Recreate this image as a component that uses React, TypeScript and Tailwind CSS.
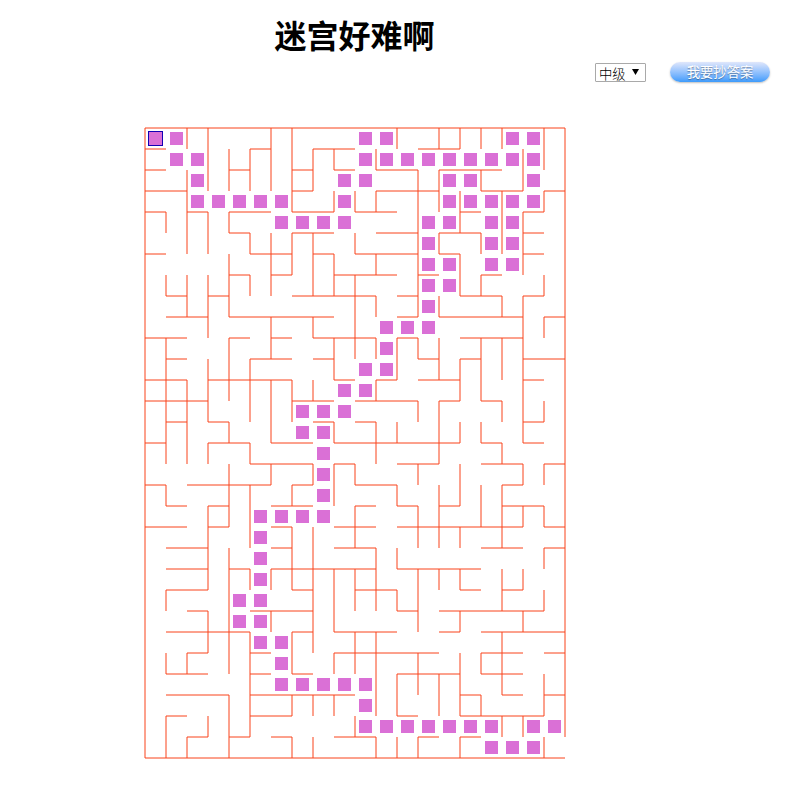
const CELL = 21;

// Wall runs as [start, end] pairs, one list for each grid line.
const HORIZONTAL: number[][][] = [
  [[0, 20]],
  [[0, 1], [5, 6], [8, 10], [13, 15]],
  [[0, 1], [4, 5], [7, 8], [9, 10], [11, 13], [14, 17]],
  [[0, 2], [7, 8], [11, 14], [16, 18], [19, 20]],
  [[0, 1], [2, 3], [4, 6], [7, 9], [10, 12], [15, 16], [18, 19]],
  [[4, 5], [7, 9], [11, 13], [14, 16], [18, 19]],
  [[0, 1], [5, 7], [8, 9], [10, 13], [14, 15], [18, 19]],
  [[4, 5], [6, 7], [9, 12], [13, 14], [16, 17]],
  [[1, 2], [3, 4], [7, 11], [12, 13], [15, 17], [18, 19]],
  [[1, 3], [4, 9], [12, 13], [14, 18], [19, 20]],
  [[0, 2], [4, 5], [6, 7], [8, 11], [12, 13], [15, 18]],
  [[1, 2], [5, 7], [8, 9], [13, 14], [15, 16], [18, 20]],
  [[0, 2], [3, 7], [9, 10], [11, 12], [13, 15], [18, 19]],
  [[0, 3], [7, 9], [10, 13], [14, 15], [16, 17]],
  [[1, 2], [3, 4], [8, 9], [10, 11], [18, 19]],
  [[0, 1], [3, 5], [6, 8], [9, 15], [16, 17], [18, 19]],
  [[5, 8], [9, 10], [12, 14], [16, 18], [19, 20]],
  [[0, 1], [2, 6], [7, 8], [10, 12], [17, 18]],
  [[1, 2], [3, 4], [6, 8], [10, 11], [12, 13], [14, 15], [17, 19]],
  [[0, 2], [3, 4], [6, 7], [9, 11], [12, 18], [19, 20]],
  [[1, 3], [6, 7], [9, 11], [16, 18], [19, 20]],
  [[1, 3], [4, 5], [6, 11], [12, 16]],
  [[1, 3], [7, 8], [10, 12], [15, 16], [17, 18]],
  [[2, 3], [5, 8], [12, 13], [14, 19]],
  [[1, 5], [7, 8], [9, 12], [14, 15], [16, 20]],
  [[2, 3], [5, 6], [9, 14], [16, 18], [19, 20]],
  [[1, 3], [5, 6], [7, 8], [12, 15], [16, 18]],
  [[1, 4], [5, 10], [15, 16], [17, 18], [19, 20]],
  [[1, 2], [5, 7], [12, 13], [15, 19]],
  [[2, 3], [4, 5], [6, 7], [9, 11], [13, 14], [15, 16]],
  [[0, 20]],
];

const VERTICAL: number[][][] = [
  [[0, 30]],
  [[4, 5], [7, 8], [10, 16], [17, 18], [22, 23], [25, 26], [28, 30]],
  [[0, 1], [2, 6], [7, 9], [12, 16], [25, 26], [29, 30]],
  [[0, 3], [4, 6], [7, 10], [11, 14], [15, 16], [18, 22], [23, 25], [28, 29]],
  [[1, 3], [4, 5], [6, 9], [10, 13], [14, 15], [16, 19], [20, 26], [27, 30]],
  [[1, 3], [5, 6], [7, 8], [11, 14], [15, 16], [17, 20], [21, 22], [24, 29]],
  [[0, 3], [5, 8], [9, 11], [12, 15], [16, 17], [21, 22], [23, 24]],
  [[0, 4], [5, 7], [12, 14], [17, 18], [19, 22], [24, 26], [27, 28], [29, 30]],
  [[1, 3], [5, 8], [9, 10], [12, 13], [16, 17], [19, 25], [27, 28], [29, 30]],
  [[1, 2], [3, 4], [6, 8], [10, 12], [14, 15], [16, 18], [21, 24], [25, 26], [27, 28]],
  [[3, 4], [5, 6], [7, 11], [16, 17], [18, 20], [21, 23], [24, 26], [28, 29]],
  [[1, 2], [3, 4], [6, 7], [8, 9], [10, 11], [12, 13], [14, 16], [20, 23], [24, 28], [29, 30]],
  [[0, 1], [10, 12], [14, 15], [17, 18], [20, 21], [22, 23], [26, 28], [29, 30]],
  [[2, 9], [10, 11], [13, 14], [16, 17], [18, 20], [21, 24], [25, 27], [29, 30]],
  [[0, 1], [2, 4], [5, 6], [8, 9], [10, 12], [13, 16], [17, 20], [21, 22], [26, 28]],
  [[0, 1], [3, 5], [6, 8], [11, 13], [14, 15], [16, 18], [19, 20], [21, 22], [23, 24], [25, 28], [29, 30]],
  [[0, 1], [2, 3], [5, 6], [7, 8], [10, 13], [14, 15], [17, 19], [25, 26], [27, 28]],
  [[0, 1], [3, 6], [8, 9], [10, 12], [13, 14], [15, 16], [17, 20], [21, 23], [24, 27], [28, 29]],
  [[1, 3], [4, 7], [8, 15], [16, 17], [18, 19], [21, 22], [23, 24], [28, 29]],
  [[0, 2], [3, 4], [7, 8], [9, 10], [13, 14], [16, 17], [18, 19], [20, 21], [22, 23], [26, 28], [29, 30]],
  [[0, 29]],
];

// Columns visited in each row.
const TRAIL: number[][] = [
  [0, 1, 10, 11, 17, 18],
  [1, 2, 10, 11, 12, 13, 14, 15, 16, 17, 18],
  [2, 9, 10, 14, 15, 18],
  [2, 3, 4, 5, 6, 9, 14, 15, 16, 17, 18],
  [6, 7, 8, 9, 13, 14, 16, 17],
  [13, 16, 17],
  [13, 14, 16, 17],
  [13, 14],
  [13],
  [11, 12, 13],
  [11],
  [10, 11],
  [9, 10],
  [7, 8, 9],
  [7, 8],
  [8],
  [8],
  [8],
  [5, 6, 7, 8],
  [5],
  [5],
  [5],
  [4, 5],
  [4, 5],
  [5, 6],
  [6],
  [6, 7, 8, 9, 10],
  [10],
  [10, 11, 12, 13, 14, 15, 16, 18, 19],
  [16, 17, 18],
];

function Maze() {
  return (
    <svg width="422" height="632" viewBox="-1 -1 422 632" className="block">
      <g stroke="#f9421a" strokeWidth="1">
        {HORIZONTAL.flatMap((runs, j) =>
          runs.map(([a, b]) => (
            <line key={`h${j}-${a}`} x1={a * CELL} x2={b * CELL} y1={j * CELL} y2={j * CELL} />
          )),
        )}
        {VERTICAL.flatMap((runs, i) =>
          runs.map(([a, b]) => (
            <line key={`v${i}-${a}`} x1={i * CELL} x2={i * CELL} y1={a * CELL} y2={b * CELL} />
          )),
        )}
      </g>
      <g fill="#da70d6">
        {TRAIL.flatMap((cols, row) =>
          cols.map((col) => (
            <rect key={`${row}-${col}`} x={col * CELL + 4} y={row * CELL + 4} width="13" height="13" />
          )),
        )}
      </g>
      <rect x="3.5" y="3.5" width="14" height="14" fill="none" stroke="#1400b4" />
    </svg>
  );
}

export default function App() {
  return (
    <div className="h-[800px] w-[800px] overflow-hidden bg-white font-['Noto_Sans_CJK_SC',sans-serif] text-black">
      <h1 className="w-[709px] pt-[13px] text-center text-[32px] leading-[43px] font-bold">迷宫好难啊</h1>
      <div className="mt-1.5 ml-[595px] flex h-[21px] items-start gap-6">
        <button className="mt-px flex h-[19px] w-[51px] items-center rounded-[1px] border border-[#a9a9a9] bg-white pl-[3px] text-[13.33px] leading-[19px] font-light">
          <span className="pt-px">中级</span>
          <svg width="7" height="6" viewBox="0 0 7 6" className="mb-[2px] ml-[6px]">
            <path d="M0 0h7L3.5 6z" fill="#000" />
          </svg>
        </button>
        <button className="h-5 w-[100px] rounded-full bg-linear-to-b from-[#dfe6fb] to-[#3d9bfb] text-center text-[13.33px] leading-5 text-white shadow-[0_1px_2px_rgba(0,0,0,0.25)] [text-shadow:0_1px_1px_rgba(0,0,0,0.35)]">
          我要抄答案
        </button>
      </div>
      <div className="mt-11 ml-36">
        <Maze />
      </div>
    </div>
  );
}
